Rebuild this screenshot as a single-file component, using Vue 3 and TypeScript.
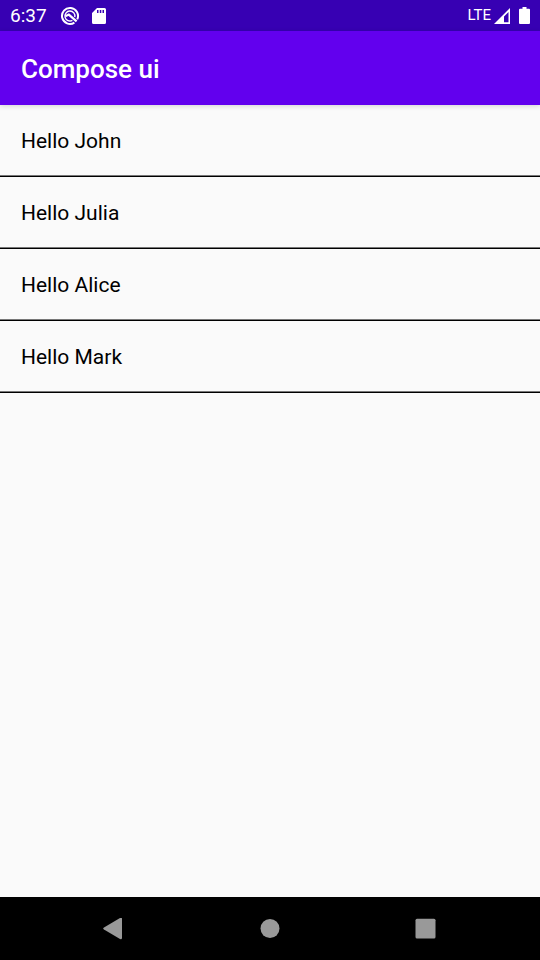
<script setup lang="ts">
interface Person {
  id: number
  name: string
}

const title = 'Compose ui'
const time = '6:37'
const people: Person[] = [
  { id: 1, name: 'John' },
  { id: 2, name: 'Julia' },
  { id: 3, name: 'Alice' },
  { id: 4, name: 'Mark' },
]
</script>

<template>
  <div class="screen">
    <div class="status-bar">
      <div class="status-group">
        <time class="clock">{{ time }}</time>
        <svg class="agent" viewBox="0 0 20 20" aria-hidden="true">
          <path d="M14.4 16.6A8 8 0 1 1 17.2 13.4" fill="none" stroke="#fff" stroke-width="2" />
          <path d="M12.4 14.4A5 5 0 1 1 14.8 11.2" fill="none" stroke="#fff" stroke-width="1.4" />
          <path d="M5.4 10.2 8.8 8.6 16.6 15.4" fill="none" stroke="#fff" stroke-width="2.2" />
        </svg>
        <svg class="card" viewBox="0 0 14 16" aria-hidden="true">
          <path
            fill="#fff"
            fill-rule="evenodd"
            d="M5 0H12.5Q14 0 14 1.5V14.5Q14 16 12.5 16H1.5Q0 16 0 14.5V5ZM5 2V5H6.5V2ZM7.8 2V5H9.3V2ZM10.5 2V5H12V2Z"
          />
        </svg>
      </div>
      <div class="status-group">
        <span class="network">LTE</span>
        <svg class="signal" viewBox="0 0 16 16" aria-hidden="true">
          <path fill="#fff" fill-rule="evenodd" d="M16 0V16H0ZM14.5 4V14.2H10V8.4Z" />
        </svg>
        <svg class="battery" viewBox="0 0 11 17" aria-hidden="true">
          <path
            fill="#fff"
            d="M3.5 0H7.5V1.7H10Q11 1.7 11 2.7V16Q11 17 10 17H1Q0 17 0 16V2.7Q0 1.7 1 1.7H3.5Z"
          />
        </svg>
      </div>
    </div>

    <header class="app-bar">
      <h1>{{ title }}</h1>
    </header>

    <main class="content">
      <ul class="people">
        <li v-for="person in people" :key="person.id">Hello {{ person.name }}</li>
      </ul>
    </main>

    <nav class="nav-bar" aria-label="System navigation">
      <button type="button" aria-label="Back">
        <svg viewBox="0 0 22 22" aria-hidden="true">
          <path fill="#999" d="M17 .1Q19 -.9 19 .9V20.1Q19 21.9 17 20.9L1 11.5Q-.6 10.5 1 9.5Z" />
        </svg>
      </button>
      <button type="button" aria-label="Home">
        <svg viewBox="0 0 22 22" aria-hidden="true">
          <circle cx="11" cy="10.5" r="9.5" fill="#999" />
        </svg>
      </button>
      <button type="button" aria-label="Overview">
        <svg viewBox="0 0 22 22" aria-hidden="true">
          <rect x=".5" y=".8" width="20" height="19.7" rx="1.5" fill="#999" />
        </svg>
      </button>
    </nav>
  </div>
</template>

<style>
body {
  margin: 0;
}
</style>

<style scoped>
.screen {
  display: flex;
  flex-direction: column;
  min-height: 100vh;
  background: #fafafa;
  color: #000;
  font-family: Roboto, "Liberation Sans", sans-serif;
}

.status-bar {
  display: flex;
  align-items: center;
  justify-content: space-between;
  box-sizing: border-box;
  height: 31px;
  padding: 0 10px;
  background: #3700b3;
  color: #fff;
}

.status-group {
  display: flex;
  align-items: center;
}

.clock {
  margin-right: 13px;
  font-size: 19px;
  line-height: 33px;
}

.agent {
  width: 20px;
  height: 20px;
  margin-right: 12px;
}

.card {
  width: 14px;
  height: 16px;
}

.network {
  margin-right: 3px;
  font-size: 15px;
  line-height: 31px;
}

.signal {
  width: 16px;
  height: 16px;
  margin-right: 9px;
}

.battery {
  width: 11px;
  height: 17px;
}

.app-bar {
  position: relative;
  display: flex;
  align-items: center;
  box-sizing: border-box;
  height: 74px;
  padding: 2px 21px 0;
  background: #6200ee;
  color: #fff;
  box-shadow: 0 1px 5px rgba(0, 0, 0, 0.16);
}

h1 {
  margin: 0;
  font-size: 26px;
  font-weight: 500;
  line-height: 32px;
}

.content {
  flex: 1;
}

.people {
  margin: 0;
  padding: 0;
  list-style: none;
}

.people li {
  padding: 22px 21px 20px;
  border-bottom: 1px solid #000;
  box-shadow: inset 0 -1px #777;
  font-size: 21px;
  line-height: 29px;
}

.nav-bar {
  display: flex;
  justify-content: center;
  gap: 92px;
  height: 63px;
  background: #000;
}

.nav-bar button {
  display: flex;
  align-items: center;
  justify-content: center;
  width: 64px;
  padding: 0;
  border: 0;
  background: none;
}

.nav-bar svg {
  width: 22px;
  height: 22px;
}
</style>
